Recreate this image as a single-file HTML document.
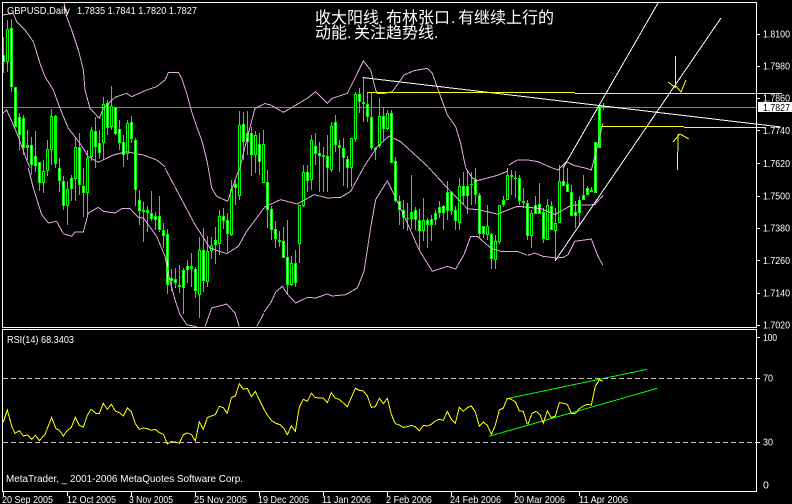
<!DOCTYPE html>
<html><head><meta charset="utf-8"><title>GBPUSD,Daily</title>
<style>
html,body{margin:0;padding:0;background:#000;width:792px;height:504px;overflow:hidden}
svg{display:block}
text{font-family:"Liberation Sans",sans-serif;font-size:10.5px;fill:#fff}
.cn{font-family:"Liberation Sans","WenQuanYi Zen Hei","Noto Sans CJK SC",sans-serif;font-size:16px}
.b polyline{fill:none;stroke:#e6a8e6;stroke-width:3}
.y polyline{fill:none;stroke:#ff0;stroke-width:3}
</style></head><body>
<svg width="792" height="504" viewBox="0 0 792 504" xmlns="http://www.w3.org/2000/svg">
<rect width="792" height="504" fill="#000"/>
<g shape-rendering="crispEdges">
<path d="M3 107.5H756" stroke="#808080" fill="none"/>
<!-- wicks -->
<path fill="none" stroke="#0f0" d="M3.5 37V73M7.5 20V72M11.5 19V92M15.5 87V127M19.5 113V150M23.5 115V155M27.5 130V160M31.5 137V175M35.5 131V172M39.5 162V191M43.5 160V193M47.5 140V176M51.5 109V165M55.5 115V168M59.5 158V192M63.5 176V210M67.5 181V225M71.5 175V201M75.5 138V201M79.5 133V195M83.5 168V217M87.5 150V216M91.5 127V161M95.5 117V168M99.5 130V159M103.5 97V160M107.5 100V135M111.5 86V130M115.5 107V135M119.5 120V150M123.5 135V167M127.5 120V160M131.5 116V143M135.5 138V206M139.5 190V225M143.5 202V242M147.5 206V232M151.5 191V221M155.5 212V230M159.5 196V232M163.5 223V248M167.5 229V294M171.5 269V291M175.5 268V288M179.5 265V293M183.5 268V314M187.5 260V283M191.5 253V287M195.5 267V298M199.5 237V318M203.5 228V292M207.5 236V287M211.5 237V259M215.5 227V264M219.5 210V255M223.5 208V229M227.5 213V252M231.5 180V236M235.5 181V205M239.5 111V200M243.5 112V160M247.5 111V155M251.5 127V176M255.5 131V173M259.5 133V175M263.5 130V183M267.5 170V228M271.5 206V240M275.5 221V248M279.5 231V247M283.5 227V258M287.5 220V295M291.5 256V286M295.5 250V287M299.5 205V263M303.5 165V207M307.5 165V192M311.5 135V190M315.5 133V165M319.5 142V192M323.5 147V192M327.5 135V192M331.5 122V172M335.5 115V152M339.5 140V172M343.5 138V186M347.5 156V188M351.5 138V187M355.5 92V142M359.5 88V113M363.5 78V122M367.5 92V122M371.5 93V150M375.5 147V160M379.5 98V148M383.5 107V140M387.5 110V130M391.5 110V163M395.5 157V202M399.5 196V225M403.5 200V229M407.5 203V231M411.5 175V229M415.5 207V230M419.5 209V251M423.5 198V241M427.5 218V248M431.5 215V241M435.5 210V225M439.5 201V218M443.5 205V230M447.5 181V220M451.5 191V215M455.5 206V230M459.5 178V230M463.5 172V205M467.5 171V214M471.5 172V205M475.5 168V204M479.5 193V238M483.5 226V238M487.5 205V240M491.5 233V269M495.5 235V269M499.5 205V244M503.5 196V207M507.5 172V200M511.5 170V195M515.5 171V198M519.5 175V205M523.5 188V208M527.5 200V240M531.5 210V248M535.5 196V214M539.5 183V214M543.5 208V243M547.5 199V240M551.5 201V230M555.5 208V261M559.5 165V223M563.5 168V186M567.5 168V192M571.5 185V216M575.5 201V228M579.5 196V225M583.5 175V200M587.5 186V195M591.5 187V192M595.5 142V193M599.5 105V148M603.5 103V110M600 106.5H607"/>
<!-- bodies -->
<path fill="none" stroke="#0f0" stroke-width="3" d="M3.5 55V62M7.5 29V62M11.5 28V87M15.5 87V127M19.5 117V135M23.5 118V148M27.5 145V148M31.5 145V165M35.5 156V166M39.5 162V183M43.5 171V183M47.5 149V171M51.5 116V150M55.5 116V164M59.5 168V181M63.5 181V206M67.5 189V206M71.5 178V189M75.5 147V179M79.5 147V185M83.5 186V193M87.5 158V193M91.5 130V157M95.5 131V147M99.5 143V153M103.5 104V143M107.5 103V128M111.5 106V127M115.5 107V134M119.5 129V143M123.5 142V155M127.5 123V154M131.5 122V139M135.5 140V190M139.5 200V211M143.5 210V212M147.5 210V213M151.5 213V219M155.5 216V220M159.5 216V230M163.5 230V236M167.5 234V285M171.5 278V281M175.5 279V283M179.5 285V287M183.5 270V288M187.5 266V270M191.5 266V269M195.5 269V291M199.5 250V295M203.5 250V281M207.5 251V282M211.5 245V251M215.5 240V245M219.5 216V244M223.5 216V221M227.5 220V234M231.5 189V235M235.5 184V188M239.5 125V196M243.5 124V142M247.5 133V142M251.5 133V155M255.5 135V155M259.5 144V162M263.5 144V183M267.5 182V210M271.5 209V230M275.5 229V239M279.5 240V242M283.5 241V258M287.5 257V285M291.5 263V285M295.5 263V283M299.5 205V244M303.5 172V206M307.5 172V181M311.5 140V180M315.5 146V154M319.5 153V156M323.5 155V157M327.5 156V168M331.5 126V170M335.5 122V145M339.5 145V148M343.5 148V158M347.5 159V168M351.5 138V168M355.5 94V139M359.5 94V102M363.5 102V104M367.5 104V117M371.5 117V148M375.5 148V150M379.5 116V146M383.5 116V129M387.5 113V129M391.5 113V163M395.5 161V201M399.5 201V210M403.5 210V218M407.5 218V219M411.5 212V219M415.5 210V220M419.5 220V231M423.5 220V231M427.5 220V225M431.5 219V225M435.5 213V220M439.5 207V213M443.5 206V213M447.5 192V211M451.5 192V211M455.5 210V221M459.5 186V223M463.5 186V196M467.5 186V196M471.5 184V185M475.5 179V195M479.5 195V234M483.5 226V234M487.5 226V235M491.5 234V259M495.5 241V260M499.5 205V242M503.5 200V205M507.5 175V200M511.5 175V177M515.5 178V179M519.5 178V201M523.5 201V203M527.5 203V236M531.5 213V236M535.5 205V214M539.5 204V214M543.5 212V239M547.5 205V240M551.5 206V230M555.5 223V231M559.5 181V223M563.5 181V186M567.5 184V192M571.5 192V216M575.5 212V216M579.5 200V213M583.5 195V200M587.5 188V195M591.5 190V192M595.5 142V193M599.5 106V148M603.5 106V107"/>
<!-- white-filled -->
<path fill="none" stroke="#fff" d="M3.5 56V61M11.5 29V86M15.5 88V126M19.5 118V134M23.5 119V147M31.5 146V164M35.5 157V165M39.5 163V182M59.5 169V180M63.5 182V205M71.5 179V188M79.5 148V184M83.5 187V192M95.5 132V146M99.5 144V152M107.5 104V127M115.5 108V133M119.5 130V142M123.5 143V154M131.5 123V138M135.5 141V189M139.5 201V210M151.5 214V218M155.5 217V219M159.5 217V229M163.5 231V235M167.5 235V284M171.5 279V280M175.5 280V282M183.5 271V287M187.5 267V269M195.5 270V290M203.5 251V280M215.5 241V244M223.5 217V220M227.5 221V233M235.5 185V187M243.5 125V141M247.5 134V141M251.5 134V154M259.5 145V161M267.5 183V209M271.5 210V229M275.5 230V238M283.5 242V257M287.5 258V284M295.5 264V282M307.5 173V180M315.5 147V153M319.5 154V155M327.5 157V167M335.5 123V144M343.5 149V157M347.5 160V167M359.5 95V101M367.5 105V116M371.5 118V147M383.5 117V128M391.5 114V162M395.5 162V200M399.5 202V209M403.5 211V217M415.5 211V219M419.5 221V230M427.5 221V224M431.5 220V224M435.5 214V219M439.5 208V212M443.5 207V212M447.5 193V210M451.5 193V210M455.5 211V220M463.5 187V195M467.5 187V195M475.5 180V194M479.5 196V233M483.5 227V233M491.5 235V258M503.5 201V204M519.5 179V200M527.5 204V235M535.5 206V213M539.5 205V213M543.5 213V238M551.5 207V229M563.5 182V185M567.5 185V191M571.5 193V215M575.5 213V215M579.5 201V212M583.5 196V199M587.5 189V194M595.5 143V192M599.5 107V120"/>
<!-- hollow -->
<path fill="none" stroke="#000" d="M7.5 30V61M43.5 172V182M47.5 150V170M51.5 117V149M67.5 190V205M75.5 148V178M87.5 159V192M91.5 131V156M103.5 105V142M111.5 107V126M127.5 124V153M199.5 251V294M207.5 252V281M211.5 246V250M219.5 217V243M231.5 190V234M239.5 126V195M255.5 136V154M263.5 145V182M291.5 264V284M299.5 206V243M303.5 173V205M311.5 141V179M331.5 127V169M351.5 139V167M355.5 95V138M379.5 117V145M387.5 114V128M423.5 221V230M459.5 187V222M487.5 227V234M495.5 242V259M499.5 206V241M507.5 176V199M531.5 214V235M547.5 206V239M555.5 224V230M559.5 182V222"/>
<!-- bollinger bands -->
<g class="b">
<polyline transform="scale(.33333)" points="192,8 200,50 215,90 235,150 250,210 255,270 270,325 298,355 310,325 345,292 380,280 395,290 440,270 470,260 495,240 505,218 535,217 545,235 560,280 575,335 590,380 605,420 618,470 625,503"/>
<polyline transform="translate(0,168) scale(.33333)" points="625,0 635,60 650,85 683,100 695,65 715,10 720,0"/>
<polyline transform="scale(.33333)" points="720,503 745,400 765,325 792,312"/>
<polyline transform="translate(264,0) scale(.33333)" points="0,310 20,315 58,337 130,295 155,275 190,310 205,295 250,280 270,240 298,183 320,210 335,270 340,280 362,280 385,275 420,225 450,212 490,205 505,220 530,290 550,345 575,380 590,430 605,503"/>
<polyline transform="translate(264,168) scale(.33333)" points="605,0 625,30 640,38 700,22 730,10 730,0"/>
<polyline transform="translate(264,0) scale(.33333)" points="735,495 760,480 792,480"/>
<polyline transform="translate(528,0) scale(.33333)" points="0,480 30,485 70,503 90,510 115,485 140,497 175,505 190,510 205,450 225,370"/>
<polyline transform="scale(.33333)" points="8,45 40,40 50,65 75,90 100,125 120,190 135,230 160,270 180,325 205,385 240,430 265,470 295,487 340,465 380,455 430,465 470,480 495,500"/>
<polyline transform="translate(0,168) scale(.33333)" points="495,0 540,85 585,170 630,240 680,257 715,235 740,190 792,120"/>
<polyline transform="translate(264,168) scale(.33333)" points="0,118 50,95 100,108 150,80 190,90 230,88 260,70 298,0"/>
<polyline transform="translate(264,0) scale(.33333)" points="298,503 340,440 375,408 410,425 470,480 495,503"/>
<polyline transform="translate(264,168) scale(.33333)" points="495,0 550,60 610,122 640,125 700,138 760,115 792,118"/>
<polyline transform="translate(528,168) scale(.33333)" points="0,118 40,122 80,140 130,112 200,110 225,82"/>
<polyline transform="scale(.33333)" points="8,340 20,330 40,375 55,410 80,480 90,503"/>
<polyline transform="translate(0,168) scale(.33333)" points="85,0 100,60 125,140 145,165 170,160 190,197 215,205 225,192 250,192 265,135 295,118 310,130 345,135 365,122 390,122 415,148 430,150 470,205 495,265 510,340 525,395 540,440 560,470 575,473 590,476"/>
<polyline transform="translate(0,168) scale(.33333)" points="615,476 635,420 680,408 705,435 718,476"/>
<polyline transform="translate(0,168) scale(.33333)" points="770,476 792,435"/>
<polyline transform="translate(264,168) scale(.33333)" points="0,432 20,405 35,372 55,355 70,378 95,405 130,388 155,390 190,378 205,384 245,380 280,360 300,310 320,180 335,95 370,38 395,90 430,165 465,245 505,310 550,295 575,303 600,260 620,205 640,205 680,240 710,250 760,250 790,262"/>
<polyline transform="translate(528,168) scale(.33333)" points="0,262 20,255 45,265 85,270 105,268 120,260 140,220 190,213 210,265 225,292"/>
</g>
<!-- white trend lines -->
<path fill="none" stroke="#fff" d="M362.5 77.5L781 127M555 261L721 18M563 168L658 3"/>
<!-- yellow lines -->
<path fill="none" stroke="#ff0" d="M367 92.5H575M575 93.5H782M601 126.5H684M684 127.5H765M675.5 56V88M668 82L676 88M676 86L681 92L686 80M677.5 170L678 134M673 142L680 134L689 139"/>
<!-- rsi green -->
<path fill="none" stroke="#0f0" d="M506.7 398.7L647 369.3M489 436.3L657.3 388.3"/>
<!-- rsi levels -->
<path fill="none" stroke="#c0c0c0" stroke-dasharray="5 3" d="M3 378.5H756M3 442.5H756"/>
<!-- rsi -->
<g class="y">
<polyline transform="translate(0,336) scale(.33333)" points="10,258 22,222 35,270 45,292 58,284 70,300 82,297 95,310 106,298 118,314 135,295 155,244 168,278 178,283 190,300 202,283 214,274 226,244 238,268 250,273 262,238 273,220 288,232 298,232 310,202 322,220 334,205 346,225 358,230 370,240 382,216 394,228 406,263 418,280 430,276 442,278 454,283 466,280 478,290 490,295 502,324 514,317 526,318 538,322 550,296 562,291 574,295 586,315 598,257 610,280 622,245 634,240 646,236 658,211 670,215 682,232 694,185 706,180 718,143 730,160 742,157 754,182 766,166 778,192 792,220"/>
<polyline transform="translate(264,336) scale(.33333)" points="0,220 12,240 24,255 36,262 48,266 60,278 70,296 82,270 94,286 106,213 118,190 130,196 142,172 154,185 178,186 190,200 202,170 214,187 226,190 250,212 274,157 286,163 298,165 310,180 322,214 334,212 346,187 358,203 370,187 382,235 394,263 406,267 418,274 430,272 442,268 454,272 466,284 478,268 490,270 502,265 514,255 526,250 538,253 550,226 562,250 574,262 586,214 598,226 610,215 622,210 634,228 646,270 658,258 670,268 682,295 694,268 706,222 718,216 730,187 742,190 754,197 766,225 778,226 790,265"/>
<polyline transform="translate(528,336) scale(.33333)" points="0,265 12,232 24,226 36,236 46,262 58,224 70,245 82,240 94,200 106,202 118,205 130,232 142,232 154,218 166,210 178,205 190,207 202,150 214,132 225,135"/>
</g>
<!-- frames and ticks -->
<path fill="none" stroke="#fff" d="M2.5 2.5H756.5V327.5H2.5ZM2.5 329.5H756.5V491.5H2.5ZM757 34.5H760M757 66.5H760M757 98.5H760M757 130.5H760M757 163.5H760M757 196.5H760M757 228.5H760M757 260.5H760M757 293.5H760M757 325.5H760M757 337.5H760M757 378.5H760M757 442.5H760M3.5 492V496M67.5 492V496M131.5 492V496M195.5 492V496M259.5 492V496M323.5 492V496M387.5 492V496M451.5 492V496M515.5 492V496M579.5 492V496"/>
</g>
<text x="7" y="14" textLength="63" lengthAdjust="spacingAndGlyphs">GBPUSD,Daily</text>
<text x="77" y="14" textLength="120" lengthAdjust="spacingAndGlyphs">1.7835 1.7841 1.7820 1.7827</text>
<text class="cn" y="23" x="315 331 347 363 379 386 402 418 434 451 458 474 490 506 522 538">收大阳线.布林张口.有继续上行的</text>
<text class="cn" y="38" x="315 331 347 354 370 386 402 418 434">动能.关注趋势线.</text>
<g>
<text x="763" y="37.5" textLength="27" lengthAdjust="spacingAndGlyphs">1.8100</text>
<text x="763" y="69.5" textLength="27" lengthAdjust="spacingAndGlyphs">1.7980</text>
<text x="763" y="101.5" textLength="27" lengthAdjust="spacingAndGlyphs">1.7860</text>
<text x="763" y="134" textLength="27" lengthAdjust="spacingAndGlyphs">1.7740</text>
<text x="763" y="167" textLength="27" lengthAdjust="spacingAndGlyphs">1.7620</text>
<text x="763" y="199.5" textLength="27" lengthAdjust="spacingAndGlyphs">1.7500</text>
<text x="763" y="231.5" textLength="27" lengthAdjust="spacingAndGlyphs">1.7380</text>
<text x="763" y="264" textLength="27" lengthAdjust="spacingAndGlyphs">1.7260</text>
<text x="763" y="296.5" textLength="27" lengthAdjust="spacingAndGlyphs">1.7140</text>
<text x="763" y="328.5" textLength="27" lengthAdjust="spacingAndGlyphs">1.7020</text>
</g>
<rect x="758" y="102" width="34" height="10" fill="#fff" shape-rendering="crispEdges"/>
<text x="763" y="111" textLength="27" lengthAdjust="spacingAndGlyphs" style="fill:#000">1.7827</text>
<text x="763" y="341" textLength="14" lengthAdjust="spacingAndGlyphs">100</text>
<text x="763" y="381.5" textLength="10" lengthAdjust="spacingAndGlyphs">70</text>
<text x="763" y="445.5" textLength="10" lengthAdjust="spacingAndGlyphs">30</text>
<text x="763" y="488.5">0</text>
<text x="7" y="343" textLength="67" lengthAdjust="spacingAndGlyphs">RSI(14) 68.3403</text>
<text x="6" y="482" textLength="237" lengthAdjust="spacingAndGlyphs">MetaTrader, _ 2001-2006 MetaQuotes Software Corp.</text>
<text x="2" y="503" textLength="51" lengthAdjust="spacingAndGlyphs">20 Sep 2005</text>
<text x="67" y="503" textLength="49" lengthAdjust="spacingAndGlyphs">12 Oct 2005</text>
<text x="129" y="503" textLength="44" lengthAdjust="spacingAndGlyphs">3 Nov 2005</text>
<text x="194" y="503" textLength="53" lengthAdjust="spacingAndGlyphs">25 Nov 2005</text>
<text x="258" y="503" textLength="51" lengthAdjust="spacingAndGlyphs">19 Dec 2005</text>
<text x="322" y="503" textLength="49" lengthAdjust="spacingAndGlyphs">11 Jan 2006</text>
<text x="386" y="503" textLength="46" lengthAdjust="spacingAndGlyphs">2 Feb 2006</text>
<text x="450" y="503" textLength="51" lengthAdjust="spacingAndGlyphs">24 Feb 2006</text>
<text x="514" y="503" textLength="51" lengthAdjust="spacingAndGlyphs">20 Mar 2006</text>
<text x="579" y="503" textLength="49" lengthAdjust="spacingAndGlyphs">11 Apr 2006</text>
</svg>
</body></html>
